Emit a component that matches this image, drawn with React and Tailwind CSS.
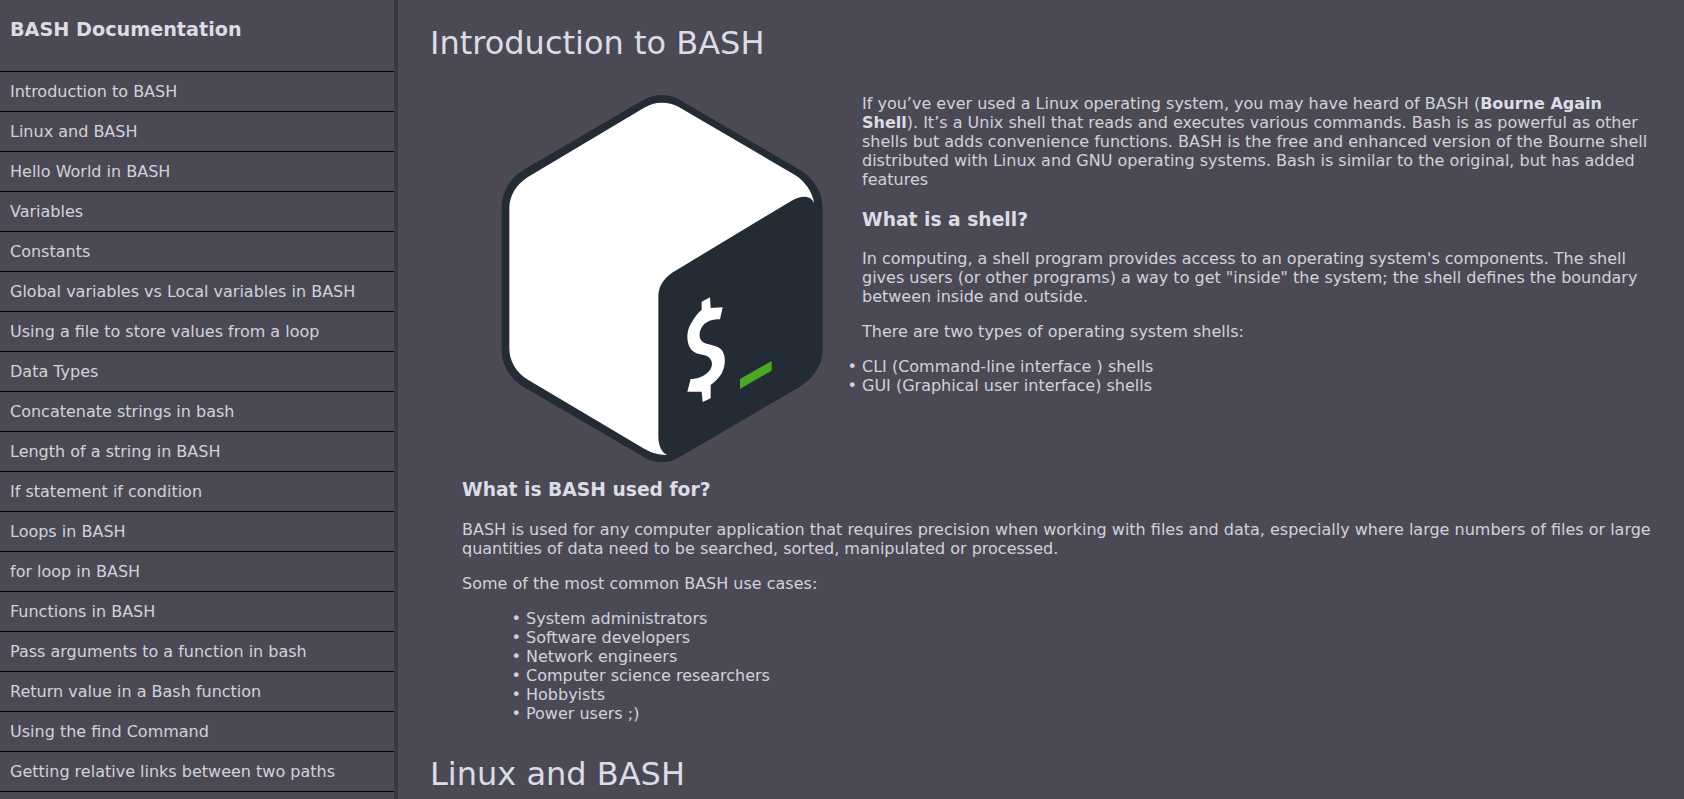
import React from 'react';

const navItems = [
    'Introduction to BASH',
    'Linux and BASH',
    'Hello World in BASH',
    'Variables',
    'Constants',
    'Global variables vs Local variables in BASH',
    'Using a file to store values from a loop',
    'Data Types',
    'Concatenate strings in bash',
    'Length of a string in BASH',
    'If statement if condition',
    'Loops in BASH',
    'for loop in BASH',
    'Functions in BASH',
    'Pass arguments to a function in bash',
    'Return value in a Bash function',
    'Using the find Command',
    'Getting relative links between two paths',
];

const useCases = [
    'System administrators',
    'Software developers',
    'Network engineers',
    'Computer science researchers',
    'Hobbyists',
    'Power users ;)',
];

const BashLogo = () => (
    <svg viewBox="-54 0 1200 1197" className="float-left w-[400px] h-[399px]">
        <path
            fill="#232b35"
            d="M490 60 L130 270 C90 295 65 335 65 385 L65 810 C65 855 90 895 130 920 L490 1130 C525 1152 565 1152 600 1130 L960 920 C1000 895 1028 855 1028 810 L1028 385 C1028 335 1000 295 960 270 L600 60 C565 40 525 40 490 60 Z"
        />
        <path
            fill="#ffffff"
            d="M545 68 C525 68 510 73 495 82 L145 290 C110 312 88 345 88 385 L88 805 C88 845 110 880 145 900 L490 1105 C515 1120 540 1126 562 1125 C545 1118 535 1095 535 1070 L535 650 C535 615 555 590 590 570 L935 362 C965 345 992 345 1003 370 C995 330 975 305 945 285 L595 80 C580 72 565 68 545 68 Z"
        />
        <path
            fill="#ffffff"
            d="M665 665 L690 652 L692 684 L728 682 L720 718 C700 718 680 722 668 738 C655 755 655 780 672 788 C690 796 715 795 727 812 C740 835 735 865 722 885 C712 900 700 908 692 915 L692 955 L668 966 L665 935 L622 935 L632 897 C650 897 675 890 690 870 C702 852 695 832 675 826 C655 822 635 820 626 795 C618 770 622 745 638 722 C645 710 655 697 665 690 Z"
        />
        <path fill="#4da825" d="M780 897 L875 843 L875 872 L780 927 Z" />
    </svg>
);

const App = () => {
    return (
        <div className="flex h-screen overflow-hidden bg-[#4b4a54] text-[#d2d2dc] font-['DejaVu_Sans',sans-serif] text-base leading-[normal]">
            <aside className="w-[398px] shrink-0 border-r-4 border-[#38373c] overflow-hidden">
                <h2 className="h-[71px] pl-[10px] pt-[18px] text-[19.2px] font-bold text-[#dcdce6]">BASH Documentation</h2>
                <nav>
                    {navItems.map((item) => (
                        <div key={item} className="h-10 flex items-center border-t border-black pl-[10px]">
                            {item}
                        </div>
                    ))}
                    <div className="h-10 border-t border-black" />
                </nav>
            </aside>

            <main className="flex-1 overflow-hidden px-8">
                <h1 className="text-[32px] mt-6 mb-[18px] text-[#dcdce6]">Introduction to BASH</h1>
                <section className="pl-8 mb-8">
                    <BashLogo />
                    <p className="pt-[14px] mb-4">
                        If you’ve ever used a Linux operating system, you may have heard of BASH (<strong className="text-[#dcdce6]">Bourne Again Shell</strong>). It’s a Unix shell that reads and executes various commands. Bash is as powerful as other shells but adds convenience functions. BASH is the free and enhanced version of the Bourne shell distributed with Linux and GNU operating systems. Bash is similar to the original, but has added features
                    </p>
                    <h3 className="text-[18.72px] font-bold mt-5 mb-[19.4px] text-[#dcdce6]">What is a shell?</h3>
                    <p className="my-4">
                        In computing, a shell program provides access to an operating system's components. The shell gives users (or other programs) a way to get "inside" the system; the shell defines the boundary between inside and outside.
                    </p>
                    <p className="my-4">There are two types of operating system shells:</p>
                    <ul className="my-4 list-['•_'] pl-10">
                        <li>CLI (Command-line interface ) shells</li>
                        <li>GUI (Graphical user interface) shells</li>
                    </ul>
                    <h3 className="clear-both text-[18.72px] font-bold my-5 text-[#dcdce6]">What is BASH used for?</h3>
                    <p className="my-4">
                        BASH is used for any computer application that requires precision when working with files and data, especially where large numbers of files or large quantities of data need to be searched, sorted, manipulated or processed.
                    </p>
                    <p className="my-4">Some of the most common BASH use cases:</p>
                    <ul className="my-4 list-['•_'] pl-16">
                        {useCases.map((useCase) => (
                            <li key={useCase}>{useCase}</li>
                        ))}
                    </ul>
                </section>
                <h1 className="text-[32px] text-[#dcdce6]">Linux and BASH</h1>
            </main>
        </div>
    );
};

export default App;
